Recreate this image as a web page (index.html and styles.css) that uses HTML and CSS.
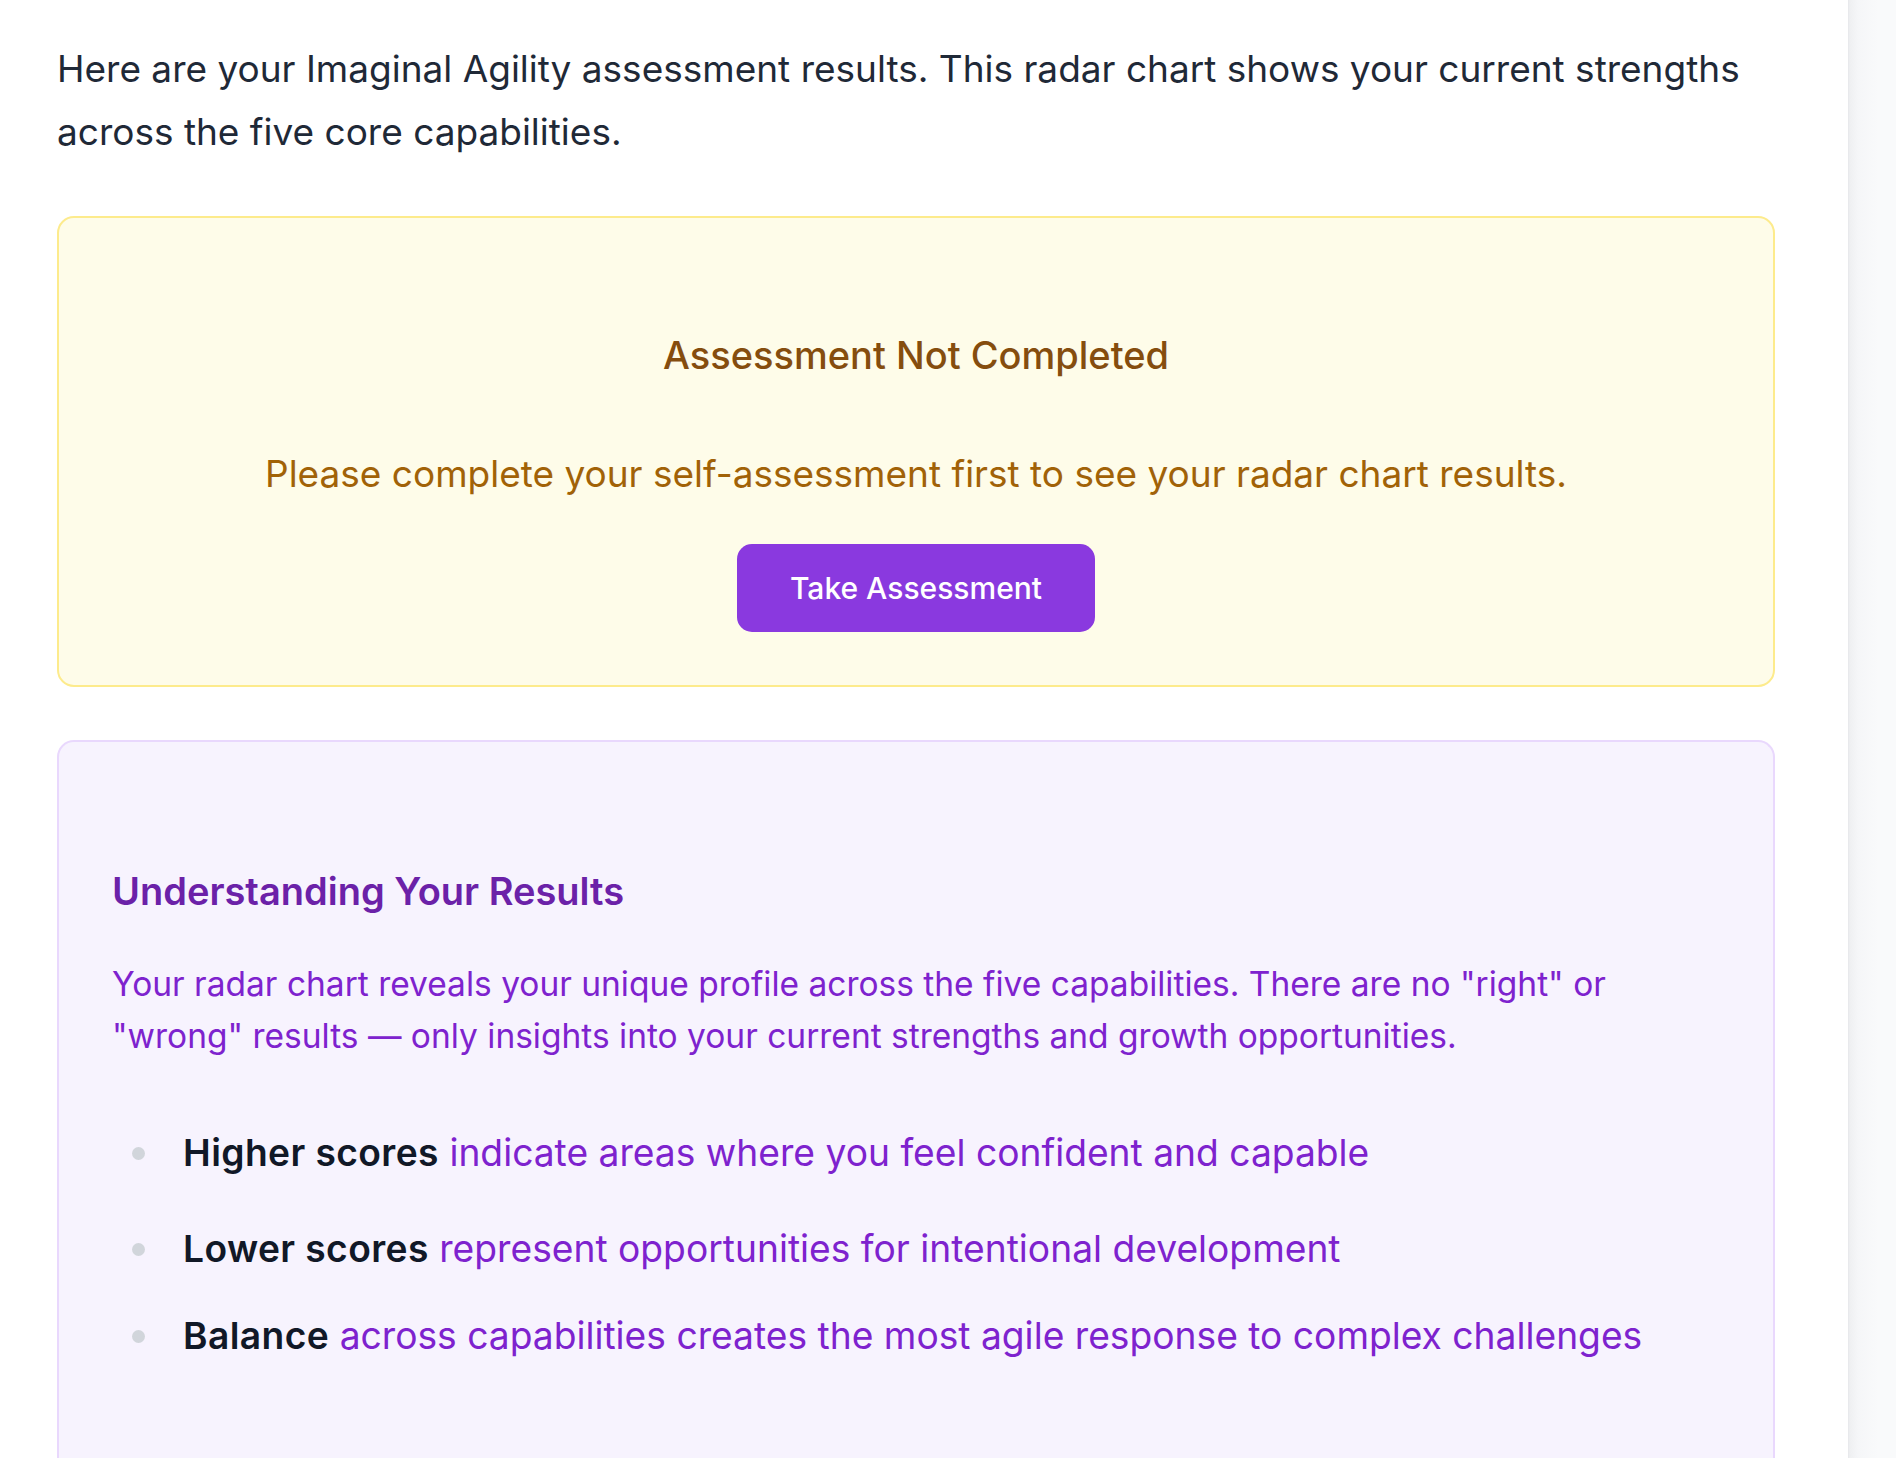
FILE: index.html
```html
<!DOCTYPE html>
<html lang="en">
<head>
<meta charset="utf-8">
<title>Imaginal Agility Results</title>
<link rel="stylesheet" href="styles.css">
</head>
<body>
<div class="layout">
  <main class="content">
    <p class="intro">Here are your Imaginal Agility assessment results. This radar chart shows your current strengths across the five core capabilities.</p>

    <section class="notice">
      <h2 class="notice-title">Assessment Not Completed</h2>
      <p class="notice-text">Please complete your self-assessment first to see your radar chart results.</p>
      <button class="btn" type="button">Take Assessment</button>
    </section>

    <section class="info">
      <h3 class="info-title">Understanding Your Results</h3>
      <p class="info-text">Your radar chart reveals your unique profile across the five capabilities. There are no "right" or "wrong" results — only insights into your current strengths and growth opportunities.</p>
      <ul class="info-list">
        <li class="item item-first"><span class="dot"></span><span class="item-text"><strong>Higher scores</strong> indicate areas where you feel confident and capable</span></li>
        <li class="item item-second"><span class="dot"></span><span class="item-text"><strong>Lower scores</strong> represent opportunities for intentional development</span></li>
        <li class="item"><span class="dot"></span><span class="item-text"><strong>Balance</strong> across capabilities creates the most agile response to complex challenges</span></li>
      </ul>
    </section>
  </main>
  <aside class="rail"></aside>
</div>
</body>
</html>
```

FILE: styles.css
```css
* { box-sizing: border-box; }

html, body {
  margin: 0;
  padding: 0;
  background: #ffffff;
  font-family: Inter, "Noto Sans", "Liberation Sans", sans-serif;
}

.layout {
  display: flex;
  min-height: 1458px;
}

.content {
  flex: 1;
  padding: 37px 73px 0 57px;
  overflow: hidden;
}

.rail {
  width: 48px;
  flex: none;
  background: linear-gradient(to right, #e6e7ea 0, #eff0f2 2px, #f5f6f8 10px, #f9fafb 30px);
}

.intro {
  margin: 0;
  font-size: 37px;
  line-height: 63px;
  color: #1f2937;
}

.notice {
  margin-top: 53px;
  height: 471px;
  border: 2px solid #fdeb8c;
  border-radius: 17px;
  background: #fefce9;
  padding: 109px 40px 0;
  display: flex;
  flex-direction: column;
  align-items: center;
  text-align: center;
}

.notice-title {
  margin: 0;
  font-size: 38px;
  line-height: 56px;
  font-weight: 500;
  color: #854d0e;
}

.notice-text {
  margin: 63px 0 0;
  font-size: 37px;
  line-height: 56px;
  color: #a16207;
}

.btn {
  margin-top: 42px;
  width: 358px;
  height: 88px;
  border: none;
  border-radius: 15px;
  background: #8a39df;
  color: #ffffff;
  font-family: inherit;
  font-size: 30px;
  font-weight: 500;
  cursor: pointer;
}

.info {
  margin-top: 53px;
  min-height: 760px;
  border: 2px solid #e9d8fd;
  border-bottom: none;
  border-radius: 17px 17px 0 0;
  background: #f7f3fe;
  padding: 121px 53px 0;
}

.info-title {
  margin: 0;
  font-size: 38px;
  line-height: 56px;
  font-weight: 600;
  color: #6b21a8;
}

.info-text {
  margin: 39px 0 0;
  font-size: 33.5px;
  line-height: 52px;
  color: #7e22ce;
}

.info-list {
  list-style: none;
  margin: 63px 0 0;
  padding: 0;
}

.item {
  display: flex;
  align-items: center;
  font-size: 37.2px;
  line-height: 56px;
  color: #7e22ce;
}

.item-first { margin-bottom: 40px; }
.item-second { margin-bottom: 31px; }

.dot {
  width: 13px;
  height: 13px;
  border-radius: 50%;
  background: #d1d5db;
  margin: 0 38px 0 20px;
  flex: none;
}

.item-text strong {
  font-weight: 600;
  letter-spacing: 0.4px;
  color: #111827;
}
```
